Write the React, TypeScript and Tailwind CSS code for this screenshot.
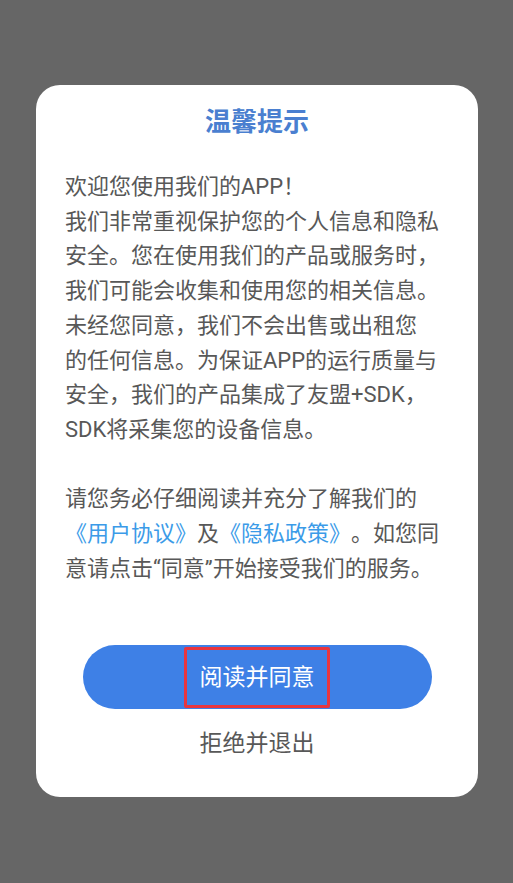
import React from "react";

const font = { fontFamily: 'Roboto, "Noto Sans CJK SC", "Noto Sans", sans-serif' };

export default function App() {
  const lines1 = [
    "欢迎您使用我们的APP！",
    "我们非常重视保护您的个人信息和隐私",
    "安全。您在使用我们的产品或服务时，",
    "我们可能会收集和使用您的相关信息。",
    "未经您同意，我们不会出售或出租您",
    "的任何信息。为保证APP的运行质量与",
    "安全，我们的产品集成了友盟+SDK，",
    "SDK将采集您的设备信息。",
  ];
  return (
    <div className="w-[513px] h-[883px] bg-[#666666] pt-[85px] [text-spacing-trim:space-all]" style={font}>
      <div className="ml-[36px] w-[442px] h-[712px] bg-white rounded-[24px] flex flex-col">
        <div className="pt-[19px] h-[36px] box-content text-center text-[26px] leading-[36px] font-bold text-[#4a7fd0]">
          温馨提示
        </div>
        <div className="mt-[30px] pl-[29px] text-[22px] leading-[34.7px] text-[#585858] whitespace-nowrap">
          {lines1.map((l, i) => (
            <div key={i}>{l}</div>
          ))}
          <div>&nbsp;</div>
          <div>请您务必仔细阅读并充分了解我们的</div>
          <div>
            <span className="text-[#3b9be8]">《用户协议》</span>及
            <span className="text-[#3b9be8]">《隐私政策》</span>。如您同
          </div>
          <div>意请点击“同意”开始接受我们的服务。</div>
        </div>
        <div className="mt-[59px] mx-auto w-[349px] h-[64px] rounded-full bg-[#3e80e6] flex items-center justify-center">
          <span className="w-[146px] h-[61px] border-[3px] border-[#e8353f] rounded-[2px] flex items-center justify-center text-white text-[23px] leading-[35px]">
            阅读并同意
          </span>
        </div>
        <div className="mt-[17px] text-center text-[23px] leading-[35px] text-[#585858]">
          拒绝并退出
        </div>
      </div>
    </div>
  );
}
